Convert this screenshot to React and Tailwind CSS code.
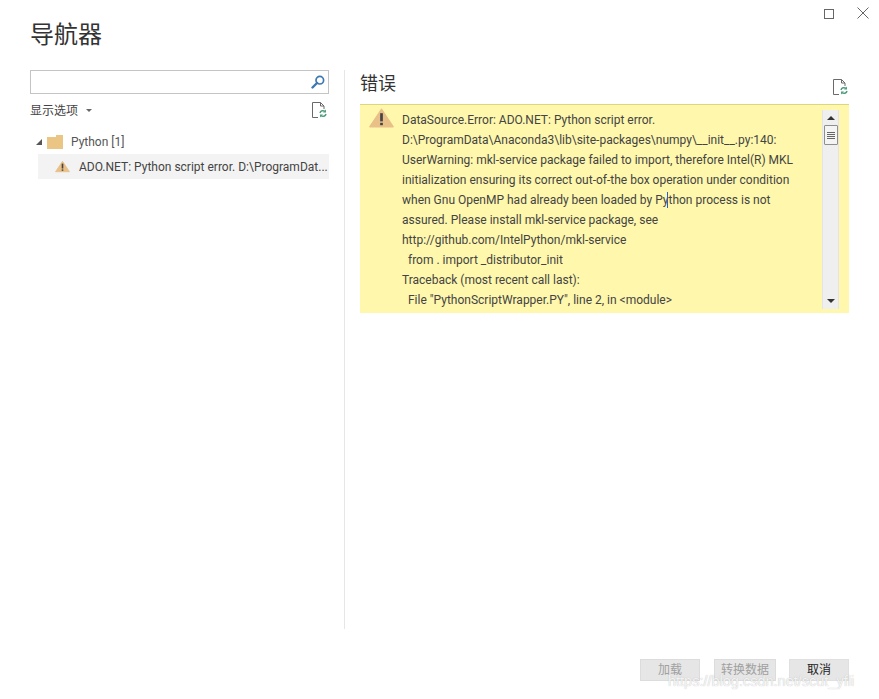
import React from 'react';

const font = { fontFamily: 'Roboto, "Noto Sans CJK SC", sans-serif' };

const errorLines = [
    'DataSource.Error: ADO.NET: Python script error.',
    'D:\\ProgramData\\Anaconda3\\lib\\site-packages\\numpy\\__init__.py:140:',
    'UserWarning: mkl-service package failed to import, therefore Intel(R) MKL',
    'initialization ensuring its correct out-of-the box operation under condition',
    'when Gnu OpenMP had already been loaded by Python process is not',
    'assured. Please install mkl-service package, see',
    'http://github.com/IntelPython/mkl-service',
    '  from . import _distributor_init',
    'Traceback (most recent call last):',
    '  File "PythonScriptWrapper.PY", line 2, in <module>',
];

function WarningIcon({ className, mark = '#444' }) {
    return (
        <svg viewBox="0 0 26 20" className={className}>
            <path d="M13 1 L25 19 L1 19 Z" fill="#e8c088" stroke="#e8c088" strokeWidth="1.5" strokeLinejoin="round" />
            <rect x="11.6" y="5" width="2.8" height="8.5" fill={mark} />
            <rect x="11.6" y="15" width="2.8" height="2.5" fill={mark} />
        </svg>
    );
}

function RefreshDocIcon() {
    return (
        <svg viewBox="0 0 16 17" className="w-4 h-[17px]">
            <path d="M0.5 0.5 H8.5 L12 4 V7 M8.5 0.5 V4 H12 M0.5 0.5 V15.5 H6" fill="none" stroke="#6a6a6a" strokeWidth="1" />
            <path d="M8 11 A3 3 0 0 1 13 9.5 M14 12 A3 3 0 0 1 9 13.5" fill="none" stroke="#4f9e7f" strokeWidth="1.5" />
            <path d="M14 7.5 V10.5 H11 Z M8 15.5 V12.5 H11 Z" fill="#4f9e7f" />
        </svg>
    );
}

export default function App() {
    return (
        <div className="relative w-[879px] h-[699px] bg-white flex flex-col overflow-hidden text-[#444]" style={font}>
            {/* Window buttons */}
            <div className="h-[70px] flex justify-between shrink-0">
                <h1 className="ml-[30px] mt-[18px] text-[24px] leading-[34px] text-[#333]">导航器</h1>
                <div className="flex items-start gap-[23px] mt-[8px] mr-[10px]">
                    <div className="w-[10px] h-[10px] mt-[0.5px] border border-[#666]" />
                    <svg viewBox="0 0 12 12" className="w-[12px] h-[12px] -mt-[1px]">
                        <path d="M0.5 0.5 L11.5 11.5 M11.5 0.5 L0.5 11.5" stroke="#666" strokeWidth="1" />
                    </svg>
                </div>
            </div>

            <div className="flex h-[559px]">
                {/* Left panel */}
                <div className="w-[345px] pl-[30px] pr-[15px] border-r border-[#e6e6e6] shrink-0">
                    <div className="h-6 border border-[#c4c4c4] flex items-center justify-end pr-[3px]">
                        <svg viewBox="0 0 14 14" className="w-[14px] h-[14px]">
                            <circle cx="8.8" cy="5.2" r="3.8" fill="none" stroke="#3f78b0" strokeWidth="1.7" />
                            <path d="M6 8 L1.5 12.5" stroke="#3f78b0" strokeWidth="2.4" strokeLinecap="round" />
                        </svg>
                    </div>
                    <div className="flex items-center justify-between h-[24px] mt-[5px]">
                        <div className="flex items-center text-[12px]">
                            <span>显示选项</span>
                            <span className="ml-[8px] mb-[2px] w-0 h-0 border-x-[3px] border-x-transparent border-t-[3px] border-t-[#666]" />
                        </div>
                        <div className="-mt-[2px] mr-px"><RefreshDocIcon /></div>
                    </div>
                    <div className="flex items-center h-[24px] mt-[7px] pl-[6px] text-[12px]">
                        <span className="w-0 h-0 border-l-[6px] border-l-transparent border-b-[6px] border-b-[#555]" />
                        <svg viewBox="0 0 16 14" className="w-4 h-[14px] ml-[5px] -mt-[1px]">
                            <path d="M0 2 H9 V0 H16 V14 H0 Z" fill="#ebc583" />
                        </svg>
                        <span className="ml-[8px] text-[#555]">Python [1]</span>
                    </div>
                    <div className="flex items-center h-[25px] ml-[8px] pl-[17px] bg-[#f3f3f3] text-[12px]">
                        <WarningIcon className="w-[15px] h-[13px] shrink-0" />
                        <span className="ml-[9px] whitespace-nowrap">ADO.NET: Python script error. D:\ProgramDat...</span>
                    </div>
                </div>

                {/* Right panel */}
                <div className="w-[489px] ml-[15px]">
                    <div className="flex justify-between h-[34px]">
                        <h2 className="text-[18px] leading-[28px] text-[#333]">错误</h2>
                        <div className="mt-[9px]"><RefreshDocIcon /></div>
                    </div>
                    <div className="h-[209px] bg-[#fef7ac] border-t border-[#dcd67e] flex">
                        <WarningIcon className="w-[25px] h-[20px] ml-[9px] mt-[3px] shrink-0" />
                        <div className="ml-[8px] w-[420px] pt-[5px] text-[12px] leading-[20px] whitespace-pre text-[#444]">
                            {errorLines.map((line, i) => (
                                <div key={i} className="relative">
                                    {line}
                                    {i === 4 && <span className="absolute left-[265px] top-[2px] w-px h-[16px] bg-[#2a5bd0]" />}
                                </div>
                            ))}
                        </div>
                        {/* Scrollbar */}
                        <div className="w-[17px] mt-[5px] mb-[4px] bg-[#efefef] border-x border-[#e4e4e4] flex flex-col items-center">
                            <span className="mt-[6px] w-0 h-0 border-x-[4px] border-x-transparent border-b-[4px] border-b-[#333]" />
                            <div className="mt-[5px] w-[14px] h-[20px] bg-[#f4f4f4] border border-[#8f8f8f] rounded-[1px] flex flex-col items-center justify-center gap-[1px]">
                                <span className="w-[8px] h-px bg-[#666]" />
                                <span className="w-[8px] h-px bg-[#666]" />
                                <span className="w-[8px] h-px bg-[#666]" />
                                <span className="w-[8px] h-px bg-[#666]" />
                            </div>
                            <span className="mt-auto mb-[6px] w-0 h-0 border-x-[4px] border-x-transparent border-t-[4px] border-t-[#333]" />
                        </div>
                    </div>
                </div>
            </div>

            {/* Footer buttons */}
            <div className="flex justify-end mt-[30px] pr-[30px] text-[12px]">
                <button className="w-[60px] h-[22px] bg-[#e6e6e6] border border-[#dcdcdc] text-[#a0a0a0]">加载</button>
                <button className="w-[62px] h-[22px] ml-[14px] bg-[#e6e6e6] border border-[#dcdcdc] text-[#a0a0a0]">转换数据</button>
                <button className="w-[60px] h-[22px] ml-[13px] bg-[#e6e6e6] border border-[#e0e0e0] text-[#222]">取消</button>
            </div>

            {/* Watermark */}
            <span className="absolute left-[668px] top-[671px] text-[14.5px] leading-[20px] text-[#ffffffd9] whitespace-nowrap [text-shadow:0_0_1px_#b0b0b0]" style={{ fontFamily: '"Liberation Sans", sans-serif' }}>
                https://blog.csdn.net/scut_yfli
            </span>
        </div>
    );
}
